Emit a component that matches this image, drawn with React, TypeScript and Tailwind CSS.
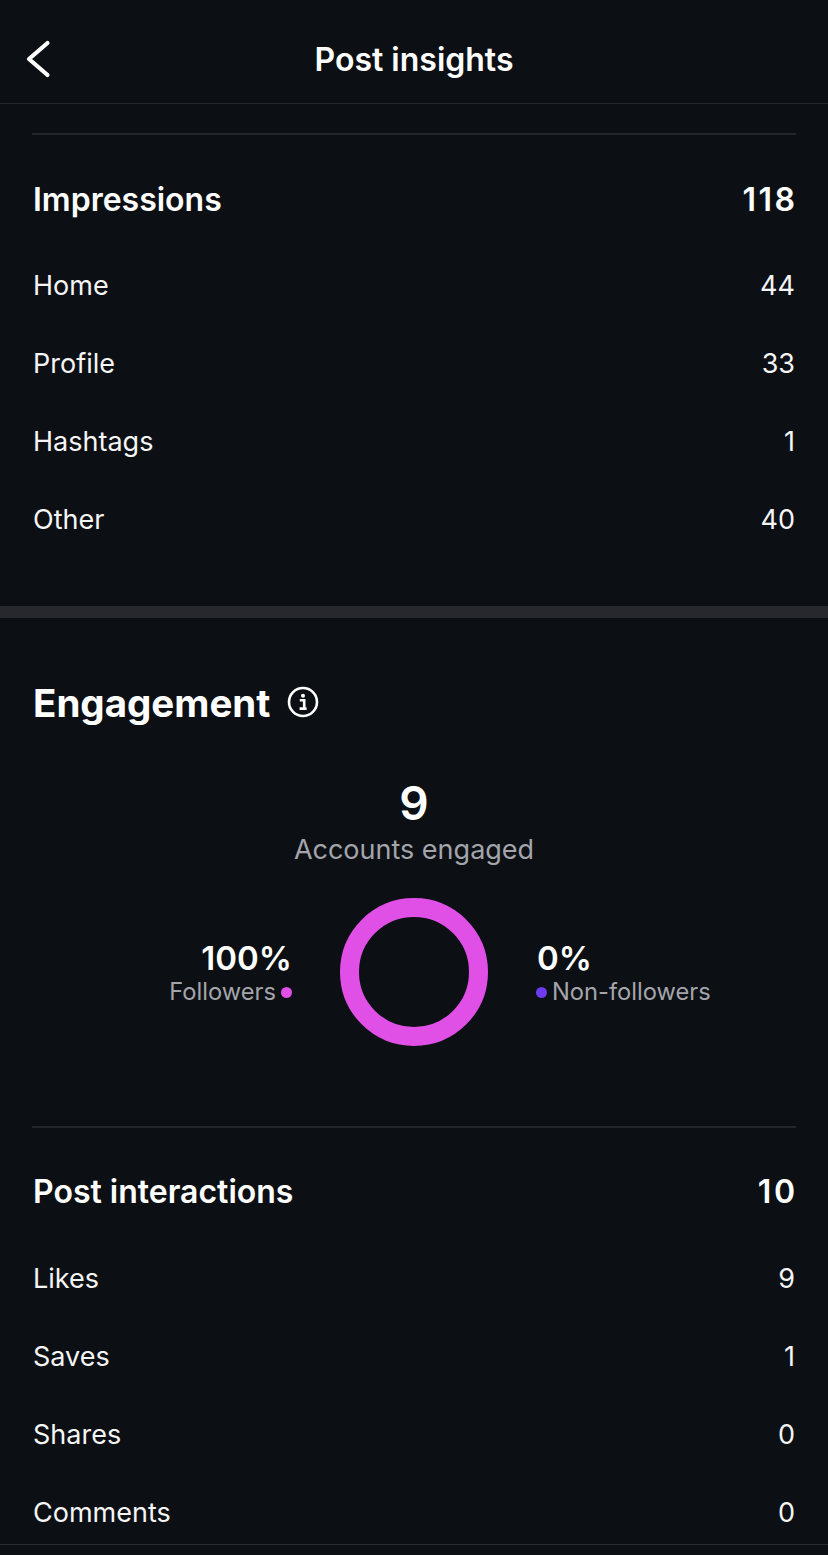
const impressions = [
  { label: "Home", value: 44 },
  { label: "Profile", value: 33 },
  { label: "Hashtags", value: 1 },
  { label: "Other", value: 40 },
];

const interactions = [
  { label: "Likes", value: 9 },
  { label: "Saves", value: 1 },
  { label: "Shares", value: 0 },
  { label: "Comments", value: 0 },
];

function Row({ label, value }: { label: string; value: number }) {
  return (
    <div className="h-[78px] flex items-center justify-between text-[27px] text-[#f5f5f5]">
      <span>{label}</span>
      <span>{value}</span>
    </div>
  );
}

function TotalRow({ label, value }: { label: string; value: number }) {
  return (
    <div className="h-[90px] flex items-center justify-between text-[32px] font-semibold text-white">
      <span>{label}</span>
      <span className="tracking-[2.5px] -mr-[2.5px]">{value}</span>
    </div>
  );
}

export default function App() {
  return (
    <div
      className="w-[828px] h-[1555px] overflow-hidden flex flex-col bg-[#0c0f14] text-white"
      style={{ fontFamily: "Inter, 'Liberation Sans', sans-serif" }}
    >
      {/* header */}
      <header className="relative h-[104px] shrink-0 flex items-center justify-center border-b border-[#24262b]">
        <svg
          className="absolute left-[24px] top-[39px]"
          width="28"
          height="40"
          viewBox="0 0 28 40"
          fill="none"
          stroke="#ffffff"
          strokeWidth="4.2"
          strokeLinecap="round"
          strokeLinejoin="round"
        >
          <path d="M23.5 4 L5 20 L23.5 36" />
        </svg>
        <h1 className="text-[32px] font-semibold pt-[16px]">Post insights</h1>
      </header>

      {/* impressions */}
      <section className="shrink-0 h-[502px] pt-[29px] px-[32px]">
        <div className="border-t-2 border-[#24262b]" />
        <div className="px-px">
          <div className="pt-[20px]">
            <TotalRow label="Impressions" value={118} />
          </div>
          <div className="mt-[2px]">
            {impressions.map((r) => (
              <Row key={r.label} label={r.label} value={r.value} />
            ))}
          </div>
        </div>
      </section>

      <div className="h-[12px] shrink-0 bg-[#26282d]" />

      {/* engagement */}
      <section className="flex-1 min-h-0 px-[32px]">
        <div className="pt-[62px] pl-px flex items-center gap-[17px]">
          <h2 className="text-[38.5px] leading-[46px] font-bold">Engagement</h2>
          <svg width="32" height="32" viewBox="0 0 32 32" fill="none" className="-mt-[2px]">
            <circle cx="16" cy="16" r="14" stroke="#ffffff" strokeWidth="2.6" />
            <circle cx="16" cy="9.8" r="2" fill="#ffffff" />
            <path d="M12.8 14.2 H17.2 V21.8 M12.6 22.6 H19.6" stroke="#ffffff" strokeWidth="2.6" />
          </svg>
        </div>

        <div className="mt-[49px] flex flex-col items-center">
          <div className="text-[46px] leading-[56px] font-semibold">9</div>
          <div className="mt-[3px] text-[27px] leading-[32px] text-[#a3a5ab]">Accounts engaged</div>
        </div>

        <div className="mt-[32px] flex items-center justify-center relative h-[148px]">
          <div className="absolute right-[504px] top-[42px] flex flex-col items-end">
            <div className="text-[33px] leading-[36px] font-semibold">100%</div>
            <div className="mt-px flex items-center gap-[5px] text-[23.7px] leading-[30px] text-[#a3a5ab]">
              Followers
              <span className="w-[11px] h-[11px] rounded-full bg-[#e04fe6]" />
            </div>
          </div>
          <div className="w-[148px] h-[148px] rounded-full border-[19px] border-[#e04fe6]" />
          <div className="absolute left-[504px] top-[42px] flex flex-col items-start">
            <div className="text-[33px] leading-[36px] font-semibold pl-px">0%</div>
            <div className="mt-px flex items-center gap-[5px] text-[23.7px] leading-[30px] text-[#a3a5ab]">
              <span className="w-[11px] h-[11px] rounded-full bg-[#6d3bf0]" />
              Non-followers
            </div>
          </div>
        </div>

        <div className="mt-[80px] border-t-2 border-[#24262b]" />
        <div className="px-px">
          <div className="pt-[19px]">
            <TotalRow label="Post interactions" value={10} />
          </div>
          <div className="mt-[3px]">
            {interactions.map((r) => (
              <Row key={r.label} label={r.label} value={r.value} />
            ))}
          </div>
        </div>
      </section>

      <div className="shrink-0 h-[11px] border-t border-[#2a2c31]" />
    </div>
  );
}
